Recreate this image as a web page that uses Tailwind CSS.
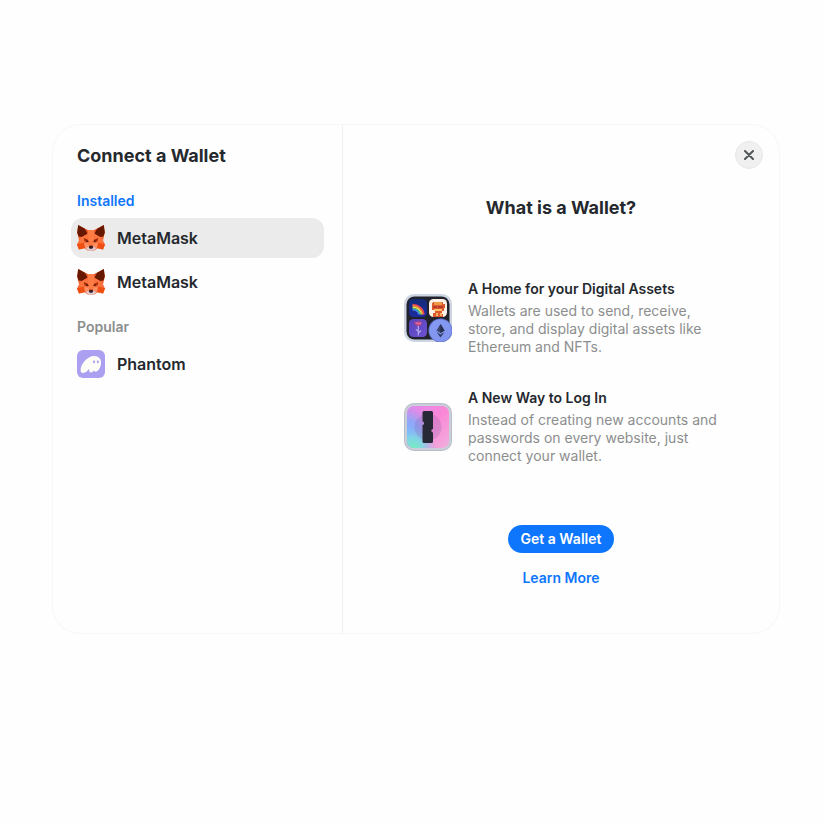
<!DOCTYPE html>
<html lang="en">
<head>
<meta charset="utf-8">
<meta name="viewport" content="width=device-width, initial-scale=1">
<title>Connect a Wallet</title>
<script src="https://cdn.jsdelivr.net/npm/@tailwindcss/browser@4"></script>
</head>
<body class="min-h-screen bg-[#fefefe] pt-[124px] pr-[45px] pb-12 pl-[52px] font-['Inter',sans-serif] text-[#25292e]">
<svg class="hidden" aria-hidden="true">
  <symbol id="fox" viewBox="0 0 28 28">
    <path d="M1.200 1 10.500 6h7l9.300-5 1 7.500-1.800 8L28 20.500l-1.800 5-5.700-1.200-3.500 2.500h-6l-3.500-2.500-5.700 1.200L0 20.500l2-4-1.800-8z" fill="#f4672f"/>
    <path d="M1.200 1 7 4.200c2 1.500 3 3.300 3.300 5.600L5 13l-3.400-.4L.2 8.500z" fill="#661800"/>
    <path d="M26.800 1 21 4.200c-2 1.500-3 3.300-3.300 5.600L23 13l3.400-.4 1.400-4.100z" fill="#661800"/>
    <path d="M10.500 6h7l-.8 8 .8 7h-7l.8-7z" fill="#ff7d45"/>
    <path d="m7 4.200 3.500 1.800.3 4.500-.5-.7C10 7.500 9 5.700 7 4.200zM21 4.200 17.500 6l-.3 4.500.5-.7c.3-2.300 1.300-4.100 3.300-5.600z" fill="#e65324"/>
    <path d="m5 13 5.500-3 .8 5-3.800 1.500-1 3.500H1l1.200-4zM23 13l-5.500-3-.8 5 3.800 1.500 1 3.500H27l-1.200-4z" fill="#fa7440"/>
    <path d="m1.500 19.700 5.500-1 1.500 1.300-.5 4-5.800 1.500L0 20.500zM26.500 19.700l-5.500-1-1.500 1.300.5 4 5.800 1.500L28 20.500z" fill="#ef4f10"/>
    <path d="m7 18.700 4 .8 1.300 2.500-4.300 2zM21 18.700l-4 .8-1.300 2.500 4.300 2z" fill="#ff9167"/>
    <path d="m6.800 14 3.700 1.600 1 2.500-4-.9zM21.200 14l-3.700 1.600-1 2.500 4-.9z" fill="#a42c09"/>
    <path d="m9.300 16.500 2 .3.200 1.300-2.500-.5zM18.700 16.500l-2 .3-.2 1.300 2.500-.5z" fill="#401510"/>
    <path d="m8.500 24 3.500-1.500h4l3.500 1.500-3 2.800h-5z" fill="#dfcbd2"/>
    <path d="M12.500 21.800h3l.7 1.700-1 1.300h-2.400l-1-1.300z" fill="#3b1b1c"/>
  </symbol>
</svg>
<main role="dialog" aria-labelledby="title" class="flex min-h-[510px] rounded-[28px] border border-[#f7f7f7] bg-[#fefefe]">
  <aside class="w-[290px] shrink-0 border-r border-[#efefef] px-[18px] pt-5">
    <h1 id="title" class="px-1.5 text-lg leading-[22px] font-bold">Connect a Wallet</h1>
    <h2 class="mt-[25px] px-1.5 text-sm leading-[18px] font-semibold text-[#0e76fd]">Installed</h2>
    <ul class="mt-2 flex flex-col gap-1">
      <li><button type="button" class="flex h-10 w-full items-center gap-3 rounded-xl bg-[#eaebea] px-1.5 text-base font-semibold"><svg class="size-7" aria-hidden="true"><use href="#fox"/></svg>MetaMask</button></li>
      <li><button type="button" class="flex h-10 w-full items-center gap-3 rounded-xl px-1.5 text-base font-semibold"><svg class="size-7" aria-hidden="true"><use href="#fox"/></svg>MetaMask</button></li>
    </ul>
    <h2 class="mt-4 px-1.5 text-sm leading-[18px] font-semibold text-[#8c8e8e]">Popular</h2>
    <ul class="mt-2">
      <li><button type="button" class="flex h-10 w-full items-center gap-3 rounded-xl px-1.5 text-base font-semibold">
        <svg class="size-7" viewBox="0 0 28 28" aria-hidden="true">
          <rect width="28" height="28" rx="6" fill="#ab9ff2"/>
          <path d="M12.200 18.600c-1.300 2-3.400 4.400-6.200 4.400-1.300 0-2.400-.7-2.400-2.500C3.600 14.200 9.900 6 17.300 6c4.200 0 6.800 2.900 6.800 6.400 0 4.500-2.800 9.300-5.600 9.300-.9 0-1.400-.6-1.400-1.400-.7 1.200-1.800 2.200-3.100 2.200-1.500 0-2.400-1.500-1.800-3.900z" fill="#fffdf8"/>
          <ellipse cx="17" cy="11.800" rx="1" ry="1.500" fill="#ab9ff2"/><ellipse cx="20.800" cy="11.800" rx="1" ry="1.500" fill="#ab9ff2"/>
        </svg>Phantom</button></li>
    </ul>
  </aside>
  <section class="relative flex grow flex-col items-center pt-[72px] pb-9">
    <button type="button" aria-label="Close" class="absolute top-4 right-4 flex size-7 items-center justify-center rounded-full border border-[#e6e8e8] bg-[#f0f0f0]">
      <svg class="size-[10px]" viewBox="0 0 10 10" fill="none" stroke="#505557" stroke-width="2" stroke-linecap="round" aria-hidden="true"><path d="m1 1 8 8M9 1 1 9"/></svg>
    </button>
    <h2 class="text-lg leading-[22px] font-bold">What is a Wallet?</h2>
    <div class="mt-[61px] flex w-[314px] flex-col gap-[33px]">
      <article class="flex items-center gap-4">
        <svg class="size-12 shrink-0" viewBox="0 0 48 48" aria-hidden="true">
          <defs>
            <linearGradient id="night" x2="0" y2="1"><stop stop-color="#142b78"/><stop offset="1" stop-color="#1b2ba0"/></linearGradient>
            <linearGradient id="violet" x2="1" y2="1"><stop stop-color="#5844bd"/><stop offset="1" stop-color="#6e50cf"/></linearGradient>
            <linearGradient id="coin" x2="1" y2="1"><stop stop-color="#869bf4"/><stop offset="1" stop-color="#7f92ed"/></linearGradient>
          </defs>
          <rect width="48" height="48" rx="10" fill="#ced5e2"/>
          <rect x="2.500" y="2.500" width="43" height="43" rx="8" fill="#20232b"/>
          <rect x="5" y="5" width="18" height="18" rx="4.500" fill="url(#night)"/>
          <g fill="none" stroke-width="1.400">
            <path d="M8.500 10.500c6 0 11 4 11.500 10" stroke="#ef4056"/>
            <path d="M8.500 11.800c5.200 0 9.700 3.500 10.200 8.700" stroke="#ff8d35"/>
            <path d="M8.500 13.100c4.500 0 8.400 3 8.900 7.400" stroke="#f4e04b"/>
            <path d="M8.500 14.400c3.800 0 7.100 2.500 7.600 6.100" stroke="#50c878"/>
            <path d="M8.500 15.700c3 0 5.800 1.800 6.300 4.800" stroke="#4488ee"/>
          </g>
          <rect x="25" y="5" width="18" height="18" rx="4.500" fill="#fff0e6"/>
          <path d="M29 8h10v2h2v4h-1v3h-2v3h1v3H29v-4h2v-3h-3V9h1z" fill="#db582e"/>
          <path d="M30 8h8v3h-8z" fill="#ed9a48"/>
          <path d="M29 12h4v2h-4zm5 0h5v2h-5z" fill="#b9392a"/>
          <path d="M30 15h8v2h-8z" fill="#ffc06c"/>
          <path d="M32 19h2v3h-2zm4 0h2v3h-2z" fill="#f6b264"/>
          <rect x="5" y="25" width="18" height="18" rx="4.500" fill="url(#violet)"/>
          <path d="m10 27.500 2.500.5 1.500-1 4 1-1 3-3 1.500-3-2z" fill="#b94688"/>
          <path d="m12 28.500 2 1.500 3-1" fill="none" stroke="#ed80aa"/>
          <path d="M14.300 32v9.500m0-2.500 2.700-2.500m-2.700.5-2.500-1.500" fill="none" stroke="#b5acec" stroke-width="1.200"/>
          <circle cx="36.500" cy="36.500" r="12" fill="#6679d4"/>
          <circle cx="36.500" cy="36.500" r="11" fill="url(#coin)"/>
          <path d="m36.500 30-4 6.500 4 2.500 4-2.500z" fill="#39446f"/>
          <path d="m36.500 30v9l4-2.500z" fill="#252d4c"/>
          <path d="m32.500 38 4 5.500 4-5.500-4 2.400z" fill="#303a62"/>
        </svg>
        <div>
          <h3 class="text-sm leading-[18px] font-semibold">A Home for your Digital Assets</h3>
          <p class="mt-1 text-sm leading-[18px] text-[#8c8e8e]">Wallets are used to send, receive, store, and display digital assets like Ethereum and NFTs.</p>
        </div>
      </article>
      <article class="flex items-center gap-4">
        <svg class="size-12 shrink-0" viewBox="0 0 48 48" aria-hidden="true">
          <defs>
            <linearGradient id="pink" x1="0" y1="0" x2="1" y2="1"><stop stop-color="#dc8bf0"/><stop offset=".5" stop-color="#fb87d6"/><stop offset="1" stop-color="#f0b0dc"/></linearGradient>
            <radialGradient id="blue" cx="0" cy=".65" r=".65"><stop stop-color="#75b6ff"/><stop offset=".5" stop-color="#86aafa" stop-opacity=".85"/><stop offset="1" stop-color="#a59cf5" stop-opacity="0"/></radialGradient>
            <radialGradient id="mint" cx=".15" cy="1" r=".55"><stop stop-color="#74efc0"/><stop offset=".45" stop-color="#7ddfe0" stop-opacity=".8"/><stop offset="1" stop-color="#9ab5f5" stop-opacity="0"/></radialGradient>
          </defs>
          <rect width="48" height="48" rx="10" fill="#b8bec9"/>
          <rect x="1" y="1" width="46" height="46" rx="9" fill="#c9ced8"/>
          <rect x="3" y="3" width="42" height="42" rx="7" fill="url(#pink)"/>
          <rect x="3" y="3" width="42" height="42" rx="7" fill="url(#blue)"/>
          <rect x="3" y="3" width="42" height="42" rx="7" fill="url(#mint)"/>
          <circle cx="24" cy="24" r="13.500" fill="#775fa8" fill-opacity=".22"/>
          <path d="M20 8h7.500a1.500 1.500 0 0 1 1.500 1.500V26a1.700 1.700 0 0 0 0 3.400v9.100a1.500 1.500 0 0 1-1.500 1.500H20a1.500 1.500 0 0 1-1.500-1.500V22a1.700 1.700 0 0 0 0-3.400V9.500A1.500 1.500 0 0 1 20 8z" fill="#282936"/>
        </svg>
        <div>
          <h3 class="text-sm leading-[18px] font-semibold">A New Way to Log In</h3>
          <p class="mt-1 text-sm leading-[18px] text-[#8c8e8e]">Instead of creating new accounts and passwords on every website, just connect your wallet.</p>
        </div>
      </article>
    </div>
    <button type="button" class="mt-[60px] h-7 rounded-full bg-[#0e76fd] px-[13px] text-sm font-semibold text-white">Get a Wallet</button>
    <a href="#" class="mt-4 text-sm leading-[18px] font-semibold text-[#0e76fd]">Learn More</a>
  </section>
</main>
</body>
</html>
